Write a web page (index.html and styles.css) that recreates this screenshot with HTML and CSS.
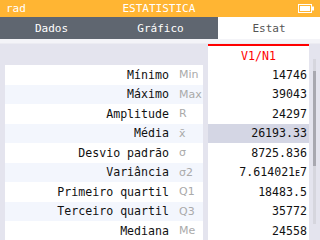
FILE: index.html
```html
<!DOCTYPE html>
<html>
<head>
<meta charset="utf-8">
<link rel="stylesheet" href="styles.css">
</head>
<body>
<div class="screen">
  <div class="status">
    <span class="mode">rad</span>
    <span class="title">ESTATISTICA</span>
    <span class="battery"><svg width="16" height="9" viewBox="0 0 16 9"><rect x="0.5" y="0.5" width="13" height="8" fill="none" stroke="#fff"/><rect x="2" y="2" width="10" height="5" fill="#fff"/><rect x="14" y="2.5" width="2" height="4" fill="#fff"/></svg></span>
  </div>
  <div class="tabs">
    <div class="tab t1">Dados</div>
    <div class="tab t2">Gráfico</div>
    <div class="tab t3 active">Estat</div>
  </div>
  <div class="strip"></div>
  <div class="content">
    <div class="labels">
      <div class="lhead"></div>
      <div class="row"><span class="name">Mínimo</span><span class="abbr">Min</span></div>
      <div class="row alt"><span class="name">Máximo</span><span class="abbr">Max</span></div>
      <div class="row"><span class="name">Amplitude</span><span class="abbr">R</span></div>
      <div class="row alt"><span class="name">Média</span><span class="abbr">x̄</span></div>
      <div class="row"><span class="name">Desvio padrão</span><span class="abbr">σ</span></div>
      <div class="row alt"><span class="name">Variância</span><span class="abbr">σ2</span></div>
      <div class="row"><span class="name">Primeiro quartil</span><span class="abbr">Q1</span></div>
      <div class="row alt"><span class="name">Terceiro quartil</span><span class="abbr">Q3</span></div>
      <div class="row"><span class="name">Mediana</span><span class="abbr">Me</span></div>
    </div>
    <div class="values">
      <div class="vhead">V1/N1</div>
      <div class="vrow">14746</div>
      <div class="vrow">39043</div>
      <div class="vrow">24297</div>
      <div class="vrow sel">26193.33</div>
      <div class="vrow">8725.836</div>
      <div class="vrow">7.614021<span class="exp">ᴇ</span>7</div>
      <div class="vrow">18483.5</div>
      <div class="vrow">35772</div>
      <div class="vrow">24558</div>
    </div>
    <div class="scroll"><div class="track"><div class="thumb"></div></div></div>
  </div>
</div>
</body>
</html>
```
FILE: styles.css
```css
html, body {
  margin: 0;
  padding: 0;
}
.screen {
  width: 320px;
  height: 240px;
  overflow: hidden;
  background: #e4e4ee;
  font-family: "DejaVu Sans Mono", monospace;
}
.status {
  height: 17px;
  background: #ffb533;
  color: #fff;
  display: flex;
  align-items: center;
  font-size: 11px;
}
.mode {
  padding-left: 6px;
}
.title {
  flex: 1;
  text-align: center;
  margin-right: 6px;
}
.battery {
  display: flex;
  padding-right: 6px;
}
.tabs {
  height: 22px;
  background: #5f6670;
  display: flex;
}
.tab {
  display: flex;
  align-items: center;
  justify-content: center;
  color: #fff;
  font-size: 11px;
}
.t1 { width: 103px; }
.t2 { width: 115px; }
.t3 { flex: 1; }
.tab.active {
  background: #fff;
  color: #555;
}
.strip {
  height: 5px;
  background: #f4f4f8;
  border-bottom: 1px solid #ececf2;
  box-sizing: border-box;
}
.content {
  display: flex;
  padding-top: 2px;
}
.labels {
  margin-left: 5px;
  width: 198px;
}
.lhead {
  height: 19px;
}
.row {
  height: 19.5px;
  background: #fff;
  display: flex;
  align-items: center;
  font-size: 11.6px;
  color: #111;
}
.row.alt {
  background: #f3f6fd;
}
.name {
  width: 164px;
  text-align: right;
}
.abbr {
  margin-left: 10px;
  font-family: "DejaVu Sans", sans-serif;
  color: #aaa;
  font-size: 11px;
}
.values {
  margin-left: 5px;
  width: 101px;
  background: #fff;
  border-top: 2px solid #ff0000;
  margin-top: -2px;
}
.vhead {
  height: 19px;
  color: #ff0000;
  font-size: 11.6px;
  display: flex;
  align-items: center;
  justify-content: center;
}
.vrow {
  height: 19.5px;
  display: flex;
  align-items: center;
  justify-content: flex-end;
  padding-right: 2px;
  font-size: 11.6px;
  color: #111;
}
.exp {
  font-family: "DejaVu Sans", sans-serif;
  font-size: 10px;
}
.vrow.sel {
  background: #d4d6e4;
}
.scroll {
  flex: 1;
  display: flex;
  justify-content: center;
  padding-top: 13px;
}
.track {
  width: 3px;
  height: 165px;
  background: #d6d6de;
}
.thumb {
  margin-top: 12px;
  height: 95px;
  background: #a8a8b0;
}
```
